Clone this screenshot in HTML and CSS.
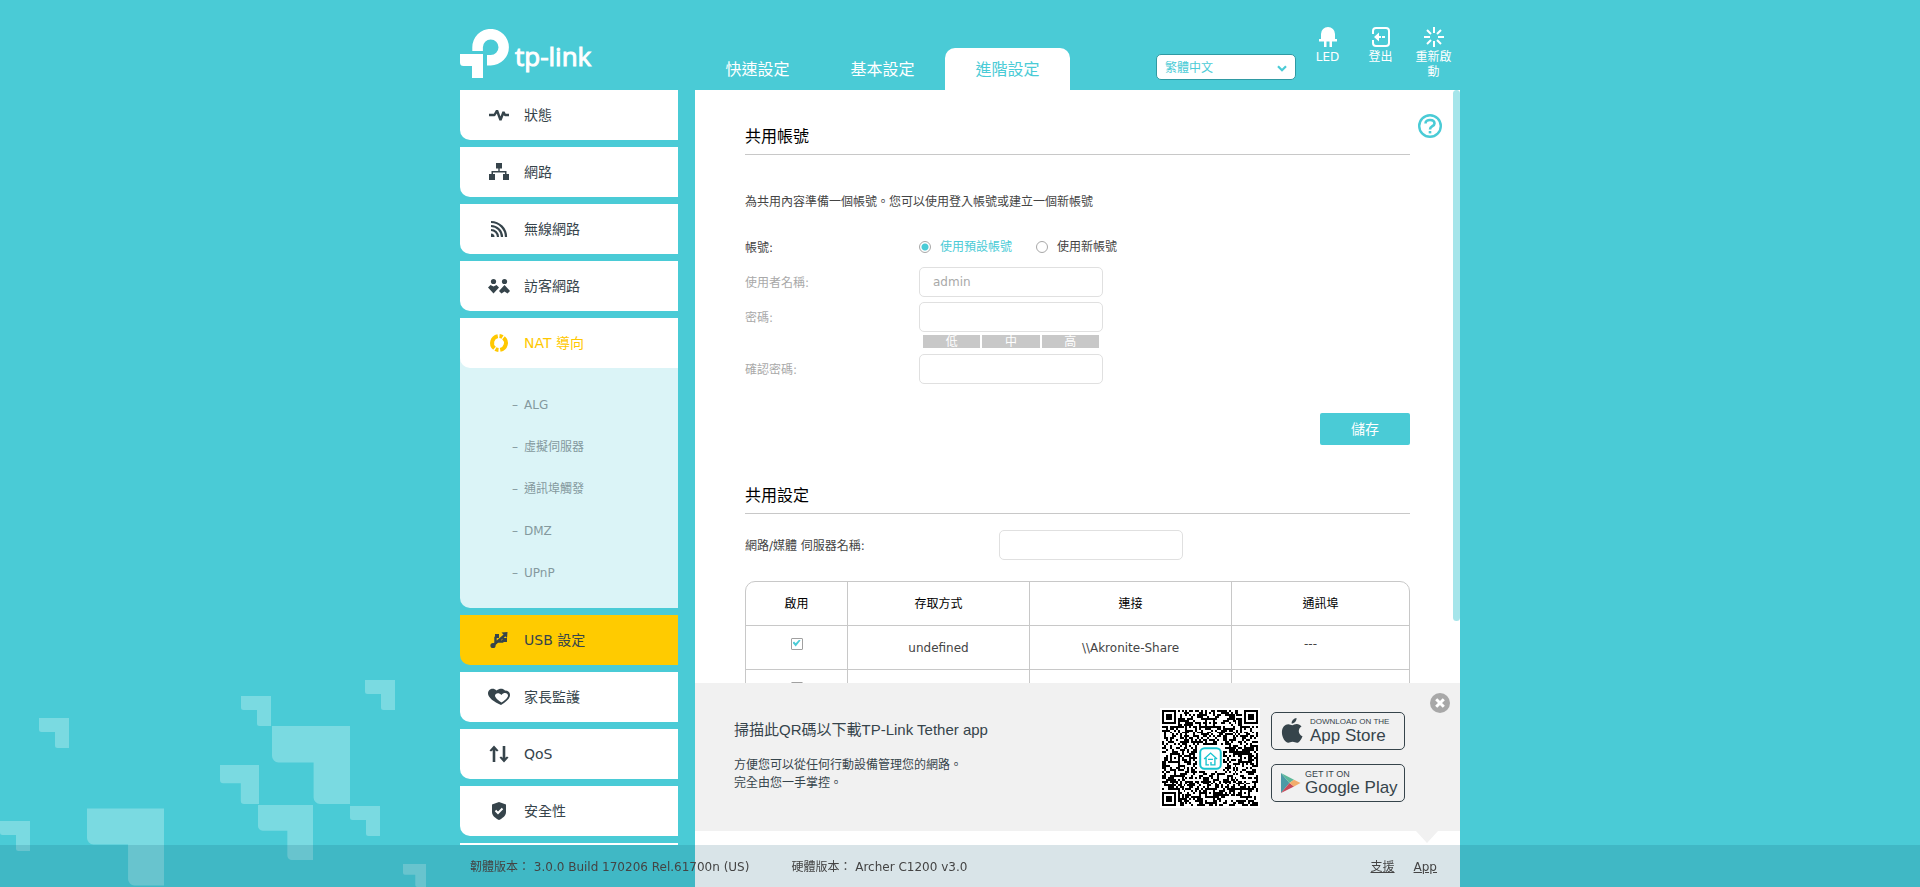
FILE: index.html
```html
<!DOCTYPE html>
<html lang="zh-Hant">
<head>
<meta charset="utf-8">
<title>TP-Link Archer C1200</title>
<link rel="stylesheet" href="styles.css">
</head>
<body>
<svg class="backdrop" width="426" height="207" viewBox="0 680 426 207" aria-hidden="true">
  <defs>
    <symbol id="block" viewBox="0 0 30 30"><path d="M0 0H30V30H18.500a2.500 2.500 0 0 1-2.500-2.500V14H2.500a2.500 2.500 0 0 1-2.500-2.500z"/></symbol>
  </defs>
  <use href="#block" x="39" y="718" width="30" height="30"/>
  <use href="#block" x="241" y="696" width="30" height="30"/>
  <use href="#block" x="365" y="680" width="30" height="30"/>
  <use href="#block" x="272" y="726" width="78" height="78"/>
  <use href="#block" x="220" y="765" width="39" height="39"/>
  <use href="#block" x="258" y="805" width="55" height="55"/>
  <use href="#block" x="350" y="806" width="30" height="30"/>
  <use href="#block" x="87" y="808" width="77" height="78"/>
  <use href="#block" x="0" y="821" width="30" height="30"/>
  <use href="#block" x="403" y="864" width="23" height="23"/>
</svg>

<div class="page">
  <header class="header">
    <a class="logo" href="#">
      <svg width="49" height="49" viewBox="0 0 49 49" aria-hidden="true"><path d="M12.300 22V18.200A18.300 18.300 0 1 1 30.700 36.500H27V26h3.700A7.800 7.800 0 1 0 22.900 18.200V22z"/><path d="M0 25H23V49H12V37H3.500A3.500 3.500 0 0 1 0 33.500z"/></svg>
      <span>tp-link</span>
    </a>
    <nav class="tabs">
      <a class="tab" href="#">快速設定</a>
      <a class="tab" href="#">基本設定</a>
      <a class="tab tab-active" href="#">進階設定</a>
    </nav>
    <div class="tools">
      <div class="language">
        <select aria-label="語言"><option>繁體中文</option></select>
        <svg width="10" height="7" viewBox="0 0 10 7" aria-hidden="true"><path d="M1 1.200l4 4 4-4" fill="none" stroke="currentColor" stroke-width="2.200"/></svg>
      </div>
      <button class="tool" type="button">
        <svg width="20" height="20" viewBox="0 0 20 20" fill="currentColor" aria-hidden="true"><path d="M3 12V7a7 7 0 0 1 14 0v5h2v2.500H14V20h-2.500v-5.500h-3V20H6v-5.500H1V12z"/></svg>
        LED
      </button>
      <button class="tool" type="button">
        <svg width="20" height="20" viewBox="0 0 20 20" fill="none" stroke="currentColor" stroke-width="2" aria-hidden="true"><path d="M2 7V4a3 3 0 0 1 3-3h10a3 3 0 0 1 3 3v12a3 3 0 0 1-3 3H5a3 3 0 0 1-3-3v-3"/><path d="M3 10l5-4.500v3.500h2v2H8v3.500z" fill="currentColor" stroke="none"/><path d="M11 10h3"/></svg>
        登出
      </button>
      <button class="tool" type="button">
        <svg width="20" height="20" viewBox="0 0 20 20" fill="none" stroke="currentColor" stroke-width="2" aria-hidden="true"><path d="M10 0v6M10 14v6M0 10h6M14 10h6M3 3l4 4M13 13l4 4M17 3l-4 4M7 13l-4 4"/></svg>
        重新啟動
      </button>
    </div>
  </header>

  <div class="body">
    <nav class="sidebar">
      <a class="item" href="#">
        <svg viewBox="0 0 22 22" fill="none" stroke="currentColor" stroke-width="2.400" stroke-linejoin="bevel"><path d="M1 11h5.500L9 6.500l3.500 9.500L15.500 8l1.500 3h4"/></svg>
        狀態
      </a>
      <a class="item" href="#">
        <svg viewBox="0 0 22 22" fill="currentColor"><path d="M8 2h6v5.500h-2.300V10H18.500v3H21v6h-6v-6h2v-1.500H5V13h2v6H1v-6h2.500v-3h6.800V7.500H8z"/></svg>
        網路
      </a>
      <a class="item" href="#">
        <svg viewBox="0 0 22 22" fill="none" stroke="currentColor" stroke-width="2.200"><path d="M3 4a15 15 0 0 1 15 15M3 8a11 11 0 0 1 11 11M3 12a7 7 0 0 1 7 7"/><path d="M3 15.500A3.500 3.500 0 0 1 6.500 19H3z" fill="currentColor" stroke="none"/></svg>
        無線網路
      </a>
      <a class="item" href="#">
        <svg viewBox="0 0 22 22" fill="currentColor"><circle cx="5.500" cy="6.500" r="2.600"/><circle cx="16.500" cy="6.500" r="2.600"/><path d="M0 12.500l2.500-2.500 3 1.500 3-1.500L11 12.500l-5.500 6z"/><path d="M16.500 10l5.500 6-2.500 2.500-3-2-3 2L11 16z"/></svg>
        訪客網路
      </a>
      <a class="item item-open" href="#">
        <svg viewBox="0 0 22 22" fill="none" stroke="currentColor" stroke-width="4"><path d="M9.800 4.100A7 7 0 0 0 6.500 16.300M12.200 17.900A7 7 0 0 0 15.500 5.700M7.500 17a7 7 0 0 0 3 1M14.500 5a7 7 0 0 0-3-1"/></svg>
        NAT 導向
      </a>
      <div class="submenu">
        <a href="#"><span>–</span>ALG</a>
        <a href="#"><span>–</span>虛擬伺服器</a>
        <a href="#"><span>–</span>通訊埠觸發</a>
        <a href="#"><span>–</span>DMZ</a>
        <a href="#"><span>–</span>UPnP</a>
      </div>
      <a class="item item-active" href="#">
        <svg viewBox="0 0 22 22" fill="none" stroke="currentColor" stroke-width="2.400"><path d="M5 16.500L17.500 5.500M7.500 14V8.500L9 7M10 12.500h4.500l2-3.500"/><circle cx="5" cy="16.500" r="2.600" fill="currentColor" stroke="none"/><path d="M13.500 3.500l6-.5-.5 6zM7 5h4v4H7zM15 9h4v4h-4z" fill="currentColor" stroke="none"/></svg>
        USB 設定
      </a>
      <a class="item" href="#">
        <svg viewBox="0 0 22 22" fill="currentColor"><path d="M13 19C6 16 0 11.500 0 7.500 0 3.500 5 1 8.500 4.500 11.500 2 15 2 17 4.500c3 0 5 1.500 5 4.500 0 4-5 7.500-9 10z"/><path d="M13.500 16.500C10.500 14.500 7 12 7 9.500 7 7 11 6 13.500 9c2-3 6.500-2.500 6.500.5 0 2.500-3.500 5-6.500 7z" fill="#fff"/></svg>
        家長監護
      </a>
      <a class="item" href="#">
        <svg viewBox="0 0 22 22" fill="none" stroke="currentColor" stroke-width="2.600"><path d="M6 19V6M16 3v13"/><path d="M1.500 7.500L6 2.500l4.500 5-1.500 1-3-2-3 2zM11.500 14.500l4.500 5 4.500-5-1.500-1-3 2-3-2z" fill="currentColor" stroke="none"/></svg>
        QoS
      </a>
      <a class="item" href="#">
        <svg viewBox="0 0 22 22" fill="currentColor"><path d="M11 2l7 2.500V12c0 4-4 6.500-7 8-3-1.500-7-4-7-8V4.500z"/><path d="M7.500 10.500l2.500 2.500 4.500-4.500" fill="none" stroke="#fff" stroke-width="2"/></svg>
        安全性
      </a>
      <a class="item" href="#" aria-label="更多"></a>
    </nav>

    <main class="main">
      <button class="help" type="button" aria-label="說明">
        <svg width="24" height="24" viewBox="0 0 24 24" fill="none" stroke="currentColor"><circle cx="12" cy="12" r="10.800" stroke-width="2.400"/><path d="M7.500 9.500C7.500 7 9.500 6 12 6s4.500 1.200 4.500 3.500c0 3-4.500 2.500-4.500 6" stroke-width="2.600"/><path d="M10.700 18.200h2.600" stroke-width="2.400"/></svg>
      </button>
      <div class="scrollbar"></div>

      <section>
        <h2>共用帳號</h2>
        <p class="intro">為共用內容準備一個帳號。您可以使用登入帳號或建立一個新帳號</p>
        <div class="row row-radio">
          <span class="label">帳號:</span>
          <label class="choice choice-on"><input type="radio" name="account" checked>使用預設帳號</label>
          <label class="choice"><input type="radio" name="account">使用新帳號</label>
        </div>
        <div class="row row-off">
          <label class="label" for="user">使用者名稱:</label>
          <input class="field" id="user" type="text" value="admin" disabled>
        </div>
        <div class="row row-off">
          <label class="label" for="pass">密碼:</label>
          <input class="field" id="pass" type="password" disabled>
        </div>
        <div class="strength"><span>低</span><span>中</span><span>高</span></div>
        <div class="row row-off">
          <label class="label" for="pass2">確認密碼:</label>
          <input class="field" id="pass2" type="password" disabled>
        </div>
        <div class="actions"><button class="save" type="button">儲存</button></div>
      </section>

      <section class="sharing">
        <h2>共用設定</h2>
        <div class="row row-server">
          <label class="label" for="server">網路/媒體 伺服器名稱:</label>
          <input class="field" id="server" type="text">
        </div>
        <table class="shares">
          <thead>
            <tr><th class="col-on">啟用</th><th class="col-access">存取方式</th><th class="col-link">連接</th><th>通訊埠</th></tr>
          </thead>
          <tbody>
            <tr><td class="raised"><input type="checkbox" checked aria-label="啟用"></td><td>undefined</td><td>\\Akronite-Share</td><td class="raised port">---</td></tr>
            <tr><td class="raised"><input type="checkbox" aria-label="啟用"></td><td></td><td></td><td></td></tr>
          </tbody>
        </table>
      </section>

      <aside class="promo">
        <div class="promo-text">
          <h3>掃描此QR碼以下載TP-Link Tether app</h3>
          <p>方便您可以從任何行動設備管理您的網路。<br>完全由您一手掌控。</p>
        </div>
        <svg class="qr" width="100" height="100" viewBox="-1 -1 51 51" role="img" aria-label="QR" shape-rendering="crispEdges">
          <rect x="-1" y="-1" width="51" height="51" fill="#fff"/>
          <path id="qr-modules"/>
          <rect x="18" y="18" width="13" height="13" fill="#fff"/>
          <g fill="none" stroke="#18c4cf" shape-rendering="auto"><rect x="19.500" y="19.500" width="10.500" height="10.500" rx="2.200"/><path d="M21.500 25l3.300-3 3.300 3M22.500 24.500V28h1.500M27 24.500V28h-2v-1.500M23.500 25.200h2.500" stroke-width=".7"/></g>
        </svg>
        <div class="stores">
          <a class="store" href="#">
            <svg width="22" height="26" viewBox="0 0 22 26" fill="currentColor" aria-hidden="true"><path d="M15.500 0c.3 3-2.200 5.600-4.900 5.500C10.300 2.800 12.900.3 15.500 0z"/><path d="M11.200 7.200c1.200 0 2.500-1.200 4.600-1.200 1.800 0 3.600.9 4.700 2.500-4 2.500-3.400 8 1 9.700-1 2.800-3.200 6.600-5.500 6.600-1.600 0-2.400-1-4.400-1s-2.900 1-4.300 1C4.200 24.800.9 19.300.9 14.300.9 9 4.200 6.200 7.200 6.200c1.700 0 3 1 4 1z"/></svg>
            <span><small>DOWNLOAD ON THE</small>App Store</span>
          </a>
          <a class="store store-play" href="#">
            <svg width="20" height="22" viewBox="0 0 20 22" aria-hidden="true"><path d="M0 1v20L8.500 11z" fill="#4b9aa6"/><path d="M0 1l8.500 10L13 7.800z" fill="#5cb89a"/><path d="M8.500 11L0 21l13-6.500z" fill="#c74a5a"/><path d="M8.500 11L13 7.800l6.500 3.200L13 14.500z" fill="#f2ac6b"/></svg>
            <span><small>GET IT ON</small>Google Play</span>
          </a>
        </div>
        <button class="close" type="button" aria-label="關閉">
          <svg width="20" height="20" viewBox="0 0 20 20" aria-hidden="true"><circle cx="10" cy="10" r="10" fill="#a8a8a8"/><path d="M6.200 6.200l7.600 7.600M13.800 6.200l-7.600 7.600" stroke="#fff" stroke-width="3"/></svg>
        </button>
      </aside>
    </main>
  </div>
</div>

<footer class="footer">
  <div class="footer-inner">
    <span>韌體版本： 3.0.0 Build 170206 Rel.61700n (US)</span>
    <span>硬體版本： Archer C1200 v3.0</span>
    <span class="links"><a href="#">支援</a><a href="#">App</a></span>
  </div>
</footer>
<script src="qr.js"></script>
</body>
</html>
```

FILE: styles.css
```css
* {
  box-sizing: border-box;
}

body {
  margin: 0;
  height: 100vh;
  overflow: hidden;
  background: #4acbd6;
  color: #444;
  font: 12px/18px "DejaVu Sans", "Noto Sans CJK TC", sans-serif;
}

a {
  color: inherit;
  text-decoration: none;
}

button {
  border: 0;
  padding: 0;
  background: none;
  color: inherit;
  font: inherit;
  cursor: pointer;
}

svg {
  display: block;
  flex: none;
}

.backdrop {
  position: fixed;
  left: 0;
  bottom: 0;
  fill: #7adae1;
}

.page {
  position: relative;
  display: flex;
  flex-direction: column;
  max-width: 1000px;
  height: 100%;
  margin: 0 auto;
}

/* Header */

.header {
  display: flex;
  flex: none;
  height: 90px;
  color: #fff;
}

.logo {
  display: flex;
  align-items: flex-start;
  gap: 6px;
  width: 235px;
  padding-top: 29px;
}

.logo svg {
  fill: #fff;
}

.logo span {
  padding-top: 9px;
  font: 26px/36px "Open Sans", sans-serif;
  -webkit-text-stroke: 1px #fff;
}

.tabs {
  display: flex;
  align-items: flex-end;
}

.tab {
  width: 125px;
  height: 42px;
  padding-top: 2px;
  border-radius: 10px 10px 0 0;
  font-size: 16px;
  line-height: 40px;
  text-align: center;
}

.tab-active {
  background: #fff;
  color: #4acbd6;
}

.tools {
  display: flex;
  align-items: flex-start;
  margin-left: auto;
}

.language {
  position: relative;
  margin: 54px 5px 0 0;
  color: #4acbd6;
}

.language select {
  appearance: none;
  display: block;
  width: 140px;
  height: 26px;
  padding: 2px 8px 0;
  border: 1px solid #2f9aa3;
  border-radius: 5px;
  background: #fff;
  color: inherit;
  font: inherit;
}

.language svg {
  position: absolute;
  top: 11px;
  right: 9px;
  pointer-events: none;
}

.tool {
  display: flex;
  flex-direction: column;
  align-items: center;
  gap: 3px;
  width: 53px;
  margin-top: 27px;
  padding: 0 6px;
  line-height: 15px;
  text-align: center;
}

/* Sidebar */

.body {
  display: grid;
  flex: 1;
  grid-template-columns: 218px 1fr;
  gap: 17px;
  min-height: 0;
}

.sidebar {
  display: flex;
  flex-direction: column;
  gap: 7px;
  margin-bottom: 42px;
  overflow: hidden;
}

.item {
  display: flex;
  flex: none;
  align-items: center;
  gap: 14px;
  height: 50px;
  padding-left: 28px;
  border-radius: 0 0 0 10px;
  background: #fff;
  color: #36444b;
  font-size: 14px;
}

.item svg {
  width: 22px;
  height: 22px;
}

.item-open {
  position: relative;
  color: #ffc800;
}

.item-active {
  background: #ffcb00;
}

.submenu {
  display: flex;
  flex: none;
  flex-direction: column;
  margin-top: -17px;
  padding: 26px 0 14px;
  border-radius: 0 0 0 10px;
  background: #dbf4f7;
  color: #84999e;
}

.submenu a {
  padding-left: 52px;
  line-height: 42px;
}

.submenu span {
  display: inline-block;
  width: 12px;
}

/* Main panel */

.main {
  position: relative;
  padding: 28px 50px 0;
  overflow: hidden;
  background: #fff;
}

.help {
  position: absolute;
  top: 24px;
  right: 18px;
  color: #4acbd6;
}

.scrollbar {
  position: absolute;
  top: 0;
  right: 0;
  width: 7px;
  height: 531px;
  border-radius: 4px;
  background: #a5e5ea;
}

h2 {
  margin: 0;
  padding-top: 2px;
  border-bottom: 1px solid #c8c8c8;
  color: #000;
  font-size: 16px;
  font-weight: 400;
  line-height: 34px;
}

.intro {
  margin: 37px 0 20px;
  line-height: 20px;
}

.row {
  display: flex;
  align-items: center;
  height: 30px;
  margin-bottom: 5px;
}

.label {
  width: 174px;
  padding-top: 2px;
}

.row-off {
  color: #a9a9a9;
}

.row-server {
  margin: 16px 0 21px;
}

.row-server .label {
  width: 254px;
}

.choice {
  display: flex;
  align-items: center;
  gap: 9px;
  margin-right: 24px;
}

.choice-on {
  color: #4acbd6;
}

.choice input {
  appearance: none;
  width: 12px;
  height: 12px;
  margin: 0;
  border: 1px solid #a8a8a8;
  border-radius: 50%;
  background: #fff;
}

.choice input:checked {
  background: radial-gradient(circle, #4acbd6 3px, #fff 4px);
}

.field {
  width: 184px;
  height: 30px;
  padding: 0 13px;
  border: 1px solid #e0e0e0;
  border-radius: 5px;
  background: #fff;
  color: #a9a9a9;
  font: inherit;
}

.strength {
  display: grid;
  grid-template-columns: repeat(3, 1fr);
  gap: 2px;
  width: 176px;
  margin: -2px 0 6px 178px;
}

.strength span {
  height: 13px;
  background: #c8c8c8;
  color: #fff;
  line-height: 15px;
  text-align: center;
}

.actions {
  display: flex;
  justify-content: flex-end;
  margin-top: 29px;
}

.save {
  width: 90px;
  height: 32px;
  border-radius: 2px;
  background: #4acbd6;
  color: #fff;
  font-size: 14px;
}

.sharing {
  margin-top: 32px;
}

.shares {
  width: 100%;
  table-layout: fixed;
  border: 1px solid #c8c8c8;
  border-radius: 10px;
  border-spacing: 0;
  text-align: center;
}

.shares th,
.shares td {
  height: 44px;
  padding: 0;
  border-right: 1px solid #c8c8c8;
  border-bottom: 1px solid #c8c8c8;
}

.shares th {
  color: #000;
  font-weight: 400;
}

.shares th:last-child,
.shares td:last-child {
  border-right: 0;
}

.col-on {
  width: 102px;
}

.col-access {
  width: 182px;
}

.col-link {
  width: 202px;
}

.shares .raised {
  padding-bottom: 8px;
}

.shares .port {
  padding-right: 20px;
}

.shares input {
  appearance: none;
  display: block;
  width: 12px;
  height: 12px;
  margin: 0 auto;
  border: 1px solid #a0a0a0;
  border-radius: 1px;
}

.shares input:checked::before {
  content: "";
  display: block;
  width: 8px;
  height: 7px;
  margin: 1px;
  background: #4acbd6;
  clip-path: polygon(0 45%, 20% 30%, 40% 55%, 85% 0, 100% 15%, 40% 100%);
}

/* App promotion */

.promo {
  position: absolute;
  right: 0;
  bottom: 56px;
  left: 0;
  display: flex;
  align-items: flex-start;
  height: 148px;
  padding: 25px 55px 0 39px;
  background: #f1f1f1;
  color: #36444b;
}

.promo::after {
  content: "";
  position: absolute;
  top: 100%;
  right: 22px;
  border: solid transparent;
  border-width: 12px 11px 0;
  border-top-color: #f1f1f1;
}

.promo-text {
  flex: 1;
}

.promo h3 {
  margin: 12px 0 16px;
  font: 15px/20px "Liberation Sans", "Noto Sans CJK TC", sans-serif;
}

.promo p {
  margin: 0;
}

.qr {
  margin-right: 11px;
}

.stores {
  display: grid;
  gap: 14px;
  padding-top: 4px;
}

.store {
  display: flex;
  align-items: center;
  gap: 7px;
  width: 134px;
  height: 38px;
  padding-left: 9px;
  border: 1px solid #36444b;
  border-radius: 5px;
  font: 17px/18px "Liberation Sans", sans-serif;
}

.store-play {
  gap: 4px;
}

.store small {
  display: block;
  font-size: 8px;
  line-height: 10px;
}

.store-play small {
  font-size: 9px;
}

.close {
  position: absolute;
  top: 10px;
  right: 10px;
}

/* Footer */

.footer {
  position: fixed;
  right: 0;
  bottom: 0;
  left: 0;
  background: rgba(10, 80, 107, 0.155);
}

.footer-inner {
  display: flex;
  gap: 42px;
  max-width: 1000px;
  margin: 0 auto;
  padding: 2px 23px 0 10px;
  line-height: 40px;
}

.links {
  display: flex;
  gap: 19px;
  margin-left: auto;
}

.links a {
  text-decoration: underline;
}
```

FILE: qr.js
```js
// Fills the code: data modules, then the finder and alignment squares on top.
const size = 49;
const grid = [];
let seed = 20170206;

for (let y = 0; y < size; y++) {
  grid.push([]);
  for (let x = 0; x < size; x++) {
    seed = (seed * 1103515245 + 12345) % 2147483648;
    grid[y].push((seed >> 12) % 100 < 50);
  }
}

function square(cx, cy, radius, rings) {
  for (let dy = -radius; dy <= radius; dy++) {
    for (let dx = -radius; dx <= radius; dx++) {
      const y = cy + dy;
      const x = cx + dx;
      if (x < 0 || y < 0 || x >= size || y >= size) continue;
      grid[y][x] = rings[Math.max(Math.abs(dx), Math.abs(dy))] === 1;
    }
  }
}

for (const cy of [6, 24, 42]) {
  for (const cx of [6, 24, 42]) square(cx, cy, 2, [1, 0, 1]);
}
for (const [cx, cy] of [[3, 3], [45, 3], [3, 45]]) square(cx, cy, 4, [1, 1, 0, 1, 0]);

let path = "";
grid.forEach((row, y) => row.forEach((on, x) => {
  if (on) path += `M${x} ${y}h1v1h-1z`;
}));
document.getElementById("qr-modules").setAttribute("d", path);
```
